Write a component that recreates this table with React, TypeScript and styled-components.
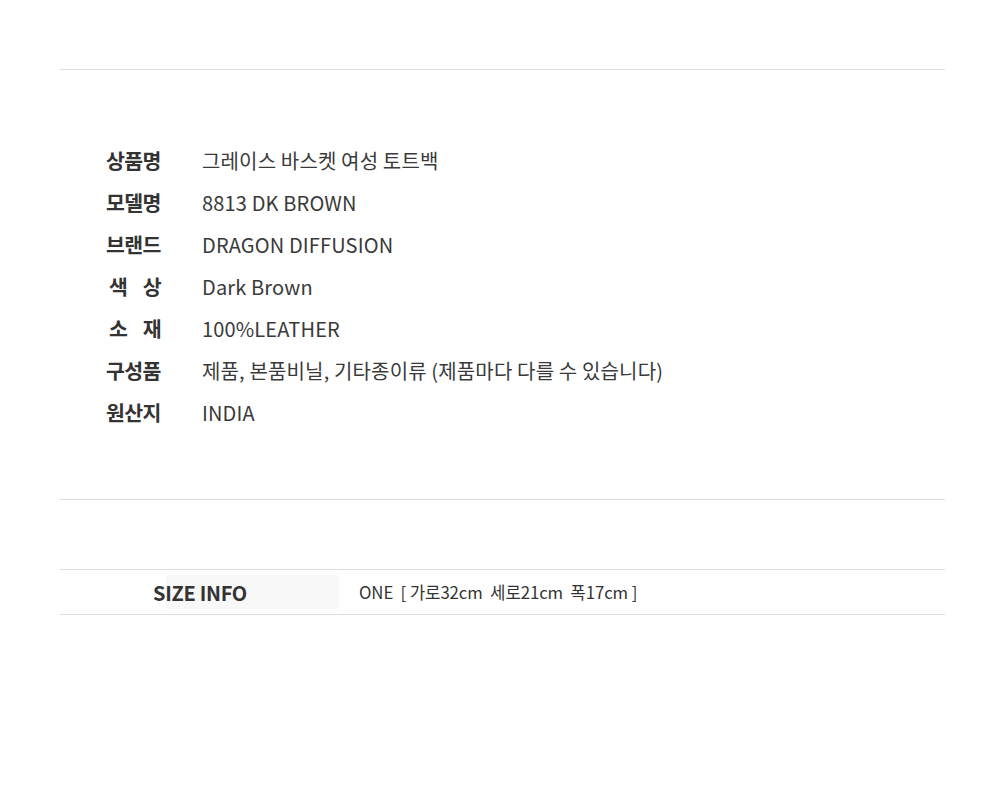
import styled, { createGlobalStyle } from "styled-components";

const GlobalStyle = createGlobalStyle`
  body {
    margin: 0;
    background: #ffffff;
    font-family: "Noto Sans CJK KR", "Noto Sans", sans-serif;
  }
`;

const Page = styled.div`
  width: 885px;
  padding: 69px 0 0 60px;
`;

const InfoSection = styled.section`
  border-top: 1px solid #dcdcdc;
  border-bottom: 1px solid #dcdcdc;
  padding: 69px 0 66px 46px;
`;

const InfoRow = styled.div`
  display: flex;
  align-items: center;
  height: 42px;
`;

const Label = styled.div`
  width: 56px;
  margin-right: 40px;
  font-size: 20.5px;
  font-weight: 700;
  letter-spacing: -0.6px;
  color: #333333;
  white-space: nowrap;
`;

const SpacedLabel = styled(Label)`
  display: flex;
  justify-content: space-between;
  padding: 0 1px 0 3px;
  width: 52px;
`;

const Value = styled.div`
  font-size: 20px;
  color: #3a3a3a;
  letter-spacing: 0.15px;
  white-space: nowrap;
`;

const SizeSection = styled.section`
  margin-top: 69px;
  border-top: 1px solid #dcdcdc;
  border-bottom: 1px solid #dcdcdc;
  height: 44px;
  display: flex;
  align-items: center;
`;

const SizeLabel = styled.div`
  width: 279px;
  height: 34px;
  display: flex;
  align-items: center;
  padding-left: 93px;
  box-sizing: border-box;
  background: linear-gradient(to right, transparent 106px, #f8f8f8 106px);
  font-size: 20px;
  font-weight: 700;
  color: #333333;
  letter-spacing: -0.3px;
`;

const SizeValue = styled.div`
  margin-left: 20px;
  font-size: 16.8px;
  color: #333333;
  letter-spacing: -0.1px;
  white-space: pre;
`;

const rows: { label: string; spaced?: boolean; value: string }[] = [
  { label: "상품명", value: "그레이스 바스켓 여성 토트백" },
  { label: "모델명", value: "8813 DK BROWN" },
  { label: "브랜드", value: "DRAGON DIFFUSION" },
  { label: "색상", spaced: true, value: "Dark Brown" },
  { label: "소재", spaced: true, value: "100%LEATHER" },
  { label: "구성품", value: "제품, 본품비닐, 기타종이류 (제품마다 다를 수 있습니다)" },
  { label: "원산지", value: "INDIA" },
];

export default function App() {
  return (
    <>
      <GlobalStyle />
      <Page>
        <InfoSection>
          {rows.map((row) => (
            <InfoRow key={row.label}>
              {row.spaced ? (
                <SpacedLabel>
                  {row.label.split("").map((ch) => (
                    <span key={ch}>{ch}</span>
                  ))}
                </SpacedLabel>
              ) : (
                <Label>{row.label}</Label>
              )}
              <Value>{row.value}</Value>
            </InfoRow>
          ))}
        </InfoSection>
        <SizeSection>
          <SizeLabel>SIZE INFO</SizeLabel>
          <SizeValue>{"ONE  [ 가로32cm  세로21cm  폭17cm ]"}</SizeValue>
        </SizeSection>
      </Page>
    </>
  );
}
